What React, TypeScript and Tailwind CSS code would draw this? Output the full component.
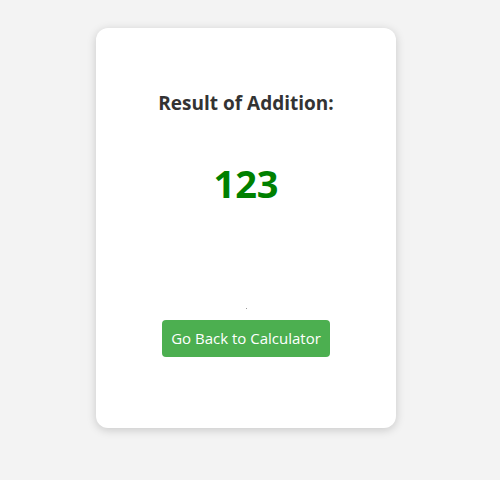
const App = () => {
    const result = 123
    return (
        <div className="min-h-[480px] bg-[#f3f3f3] flex justify-center pr-2 pt-[28px]" style={{ fontFamily: '"Open Sans", "Noto Sans", sans-serif' }}>
            <div className="w-[300px] h-[400px] bg-white rounded-[12px] shadow-[0_2px_10px_rgba(0,0,0,0.18)] flex flex-col items-center pt-[61px]">
                <h2 className="text-[19px] font-bold text-[#333] leading-[28px]">Result of Addition:</h2>
                <p className="mt-[42px] text-[38px] font-bold text-[#008000] leading-[48px]">{result}</p>
                <div className="mt-[101px] w-px h-px bg-[#999]"></div>
                <button className="mt-[11px] bg-[#4caf50] text-white text-[15px] px-[9px] h-[37px] rounded-[4px]">
                    Go Back to Calculator
                </button>
            </div>
        </div>
    )
}

export default App;
